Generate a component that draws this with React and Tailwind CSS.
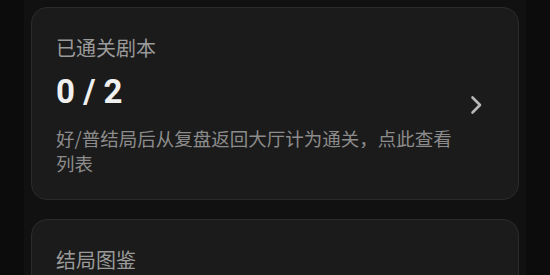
export default function App() {
  const font = { fontFamily: '"Noto Sans CJK SC", "Noto Sans", sans-serif' };
  return (
    <div className="w-[550px] h-[275px] overflow-hidden bg-[#0c0c0c]" style={font}>
      <div className="mx-[24px] h-full bg-[#111111] px-[7px] pt-[7px] flex flex-col gap-[19px]">
        <div className="rounded-[16px] border border-[#2b2b2b] bg-[#1b1b1b] pl-[24px] pr-[34px] pt-[26px] pb-[23px] flex items-center gap-[12px]">
          <div className="flex-1 min-w-0">
            <div className="text-[20px] leading-[28px] text-[#9a9a9a]">已通关剧本</div>
            <div className="mt-[10px] text-[33px] leading-[40px] font-bold text-[#f0f0f0] font-['Roboto',sans-serif]">0 / 2</div>
            <div className="mt-[14px] text-[18.5px] leading-[25px] text-[#8c8c8c]">
              好/普结局后从复盘返回大厅计为通关，点此查看列表
            </div>
          </div>
          <svg width="14" height="20" viewBox="0 0 14 20" className="shrink-0">
            <path d="M2.5 2.5 L10 10 L2.5 17.5" fill="none" stroke="#b8b8b8" strokeWidth="2.6" strokeLinecap="round" strokeLinejoin="round" />
          </svg>
        </div>
        <div className="rounded-[16px] border border-[#2b2b2b] bg-[#1b1b1b] pl-[24px] pr-[34px] pt-[26px] pb-[23px] h-[120px]">
          <div className="text-[20px] leading-[28px] text-[#9a9a9a]">结局图鉴</div>
        </div>
      </div>
    </div>
  );
}
